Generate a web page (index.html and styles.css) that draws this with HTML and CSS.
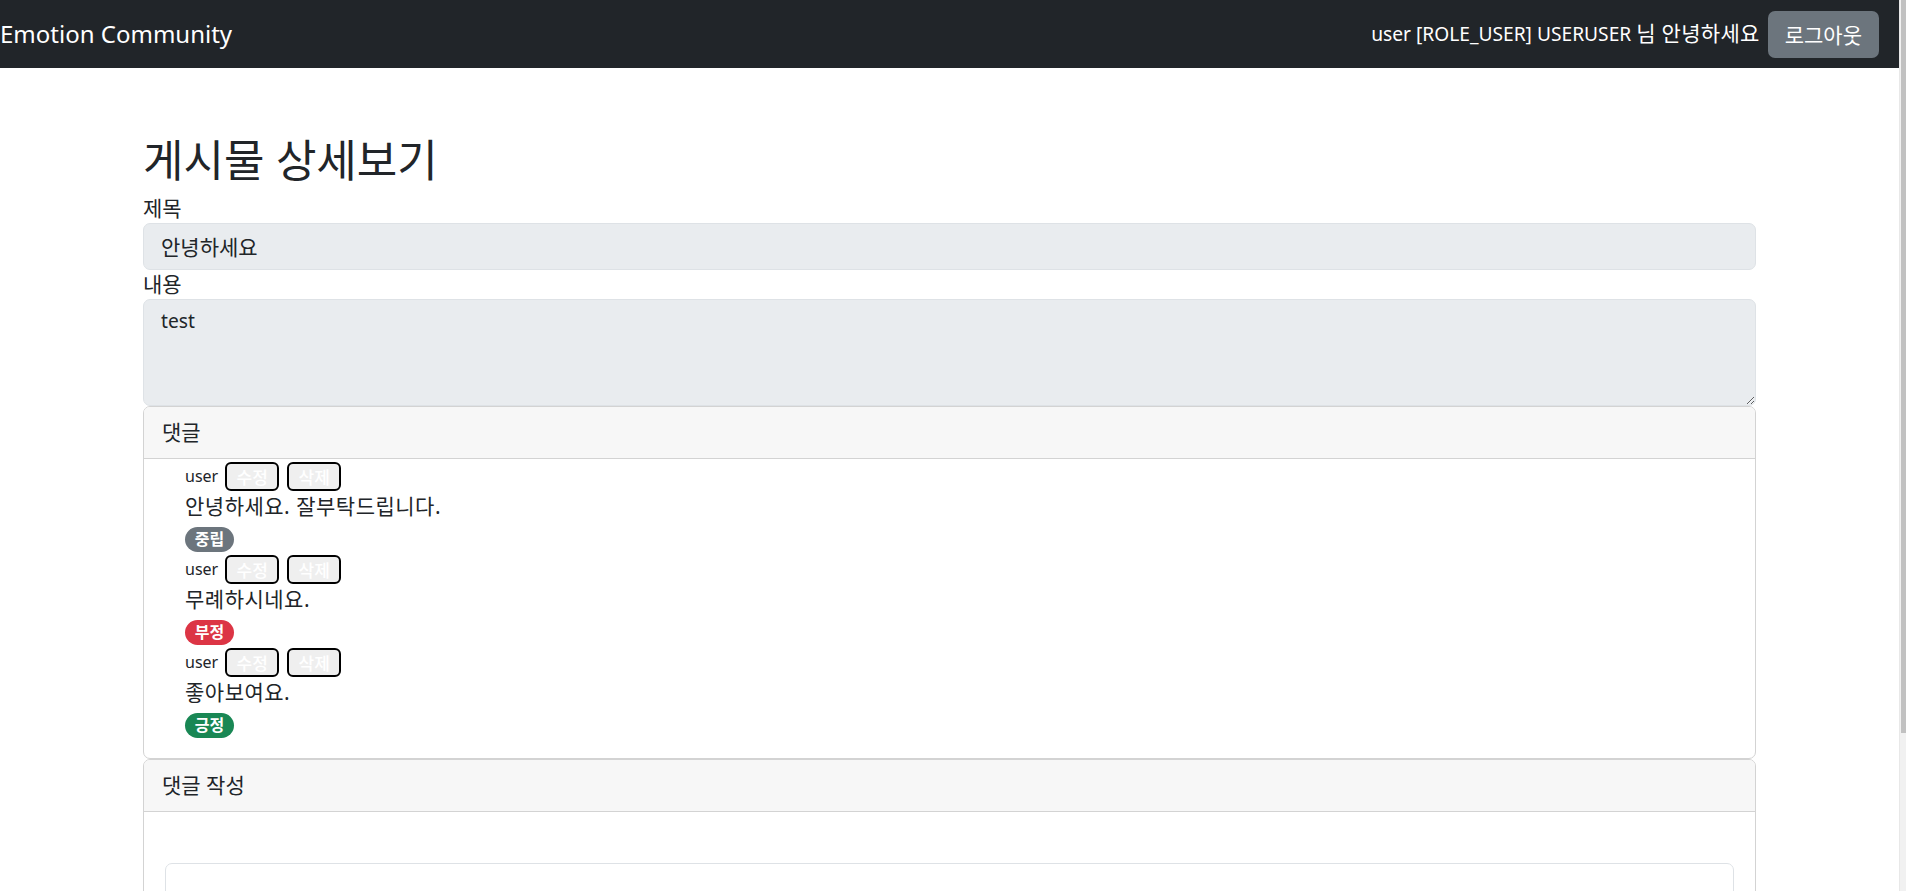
FILE: index.html
```html
<!DOCTYPE html>
<html lang="ko">
<head>
    <meta charset="UTF-8">
    <meta name="viewport" content="width=device-width, initial-scale=1.0">
    <title>게시물 상세보기 - Emotion Community</title>
    <link rel="stylesheet" href="styles.css">
</head>
<body>
    <nav class="navbar">
        <a class="navbar-brand" href="#">Emotion Community</a>
        <div class="nav-user">
            <span class="nav-greeting">user [ROLE_USER] USERUSER <span class="greeting-ko">님 안녕하세요</span></span>
            <button class="btn-logout">로그아웃</button>
        </div>
    </nav>

    <main class="page">
        <div class="container">
            <h1 class="page-title">게시물 상세보기</h1>

            <label class="form-label" for="title">제목</label>
            <input class="form-control" id="title" type="text" value="안녕하세요" readonly>

            <label class="form-label" for="content">내용</label>
            <textarea class="form-control form-textarea" id="content" readonly>test</textarea>

            <div class="card">
                <div class="card-header">댓글</div>
                <ul class="comment-list">
                    <li class="comment">
                        <div class="comment-meta">
                            <span class="comment-user">user</span>
                            <button class="btn-small">수정</button>
                            <button class="btn-small">삭제</button>
                        </div>
                        <div class="comment-text">안녕하세요. 잘부탁드립니다.</div>
                        <div class="comment-emotion"><span class="badge badge-neutral">중립</span></div>
                    </li>
                    <li class="comment">
                        <div class="comment-meta">
                            <span class="comment-user">user</span>
                            <button class="btn-small">수정</button>
                            <button class="btn-small">삭제</button>
                        </div>
                        <div class="comment-text">무례하시네요.</div>
                        <div class="comment-emotion"><span class="badge badge-negative">부정</span></div>
                    </li>
                    <li class="comment">
                        <div class="comment-meta">
                            <span class="comment-user">user</span>
                            <button class="btn-small">수정</button>
                            <button class="btn-small">삭제</button>
                        </div>
                        <div class="comment-text">좋아보여요.</div>
                        <div class="comment-emotion"><span class="badge badge-positive">긍정</span></div>
                    </li>
                </ul>
            </div>

            <div class="card">
                <div class="card-header">댓글 작성</div>
                <div class="card-body">
                    <textarea class="comment-input"></textarea>
                    <button class="btn-submit">등록</button>
                </div>
            </div>
        </div>
    </main>

    <!-- window scrollbar, drawn since the page is cut at the fold -->
    <div class="scrollbar"><div class="scrollbar-thumb"></div></div>
</body>
</html>
```

FILE: styles.css
```css
* {
    box-sizing: border-box;
}

html, body {
    height: 100%;
    overflow: hidden;
}

body {
    margin: 0 7px 0 0;
    font-family: "Noto Sans", "Noto Sans CJK KR", sans-serif;
    font-size: 19.2px;
    line-height: 1.5;
    color: #212529;
    background: #fff;
}

/* top bar */
.navbar {
    height: 68px;
    display: flex;
    align-items: center;
    justify-content: space-between;
    padding: 0 20px 0 0;
    background: #212529;
}

.navbar-brand {
    font-size: 24px;
    color: #fff;
    text-decoration: none;
}

.nav-user {
    display: flex;
    align-items: center;
    gap: 8px;
    color: #fff;
}

.greeting-ko {
    font-size: 21px;
    letter-spacing: 0.3px;
}

.btn-logout {
    height: 47px;
    padding: 0 17px;
    border: none;
    border-radius: 7px;
    background: #6c757d;
    color: #fff;
    font-family: inherit;
    font-size: 21px;
}

.page {
    padding-bottom: 50px;
}

.container {
    width: 1613px;
    margin: 0 auto;
}

.page-title {
    margin: 66px 0 7px;
    font-size: 44px;
    font-weight: 400;
    line-height: 1.2;
}

.form-label {
    display: block;
    font-size: 21px;
    line-height: 29px;
}

.form-control {
    display: block;
    width: 100%;
    height: 47px;
    padding: 7px 17px;
    border: 1px solid #dee2e6;
    border-radius: 7px;
    background: #e9ecef;
    color: #212529;
    font-family: inherit;
    font-size: 21px;
    line-height: 1.5;
}

.form-control:focus {
    outline: none;
}

.form-textarea {
    height: 107px;
    font-size: 19.2px;
    resize: vertical;
}

/* cards */
.card {
    border: 1px solid #d3d3d3;
    border-radius: 7px;
    overflow: hidden;
}

.card-header {
    height: 52px;
    padding: 0 18px;
    font-size: 21px;
    line-height: 50px;
    background: #f7f7f7;
    border-bottom: 1px solid #d3d3d3;
}

.card-body {
    padding: 51px 21px 21px;
}

.comment-list {
    list-style: none;
    margin: 0 0 17px;
    padding: 3px 0 0 41px;
}

.comment-meta {
    display: flex;
    align-items: center;
    height: 29px;
}

.comment-user {
    font-size: 16px;
    margin-right: 7px;
}

.btn-small {
    height: 29px;
    width: 54px;
    padding: 0;
    margin-right: 8px;
    border: 2px solid #000;
    border-radius: 6px;
    background: #efefef;
    color: #fff;
    font-family: inherit;
    font-size: 17px;
    font-weight: 500;
}

.comment-text {
    font-size: 21px;
    letter-spacing: 0.5px;
    line-height: 30px;
}

.comment-emotion {
    display: flex;
    align-items: flex-start;
    height: 34px;
    padding-top: 6px;
}

.badge {
    height: 25px;
    width: 49px;
    border-radius: 13px;
    color: #fff;
    font-size: 16px;
    font-weight: 700;
    line-height: 25px;
    text-align: center;
}

.badge-neutral {
    background: #6c757d;
}

.badge-negative {
    background: #dc3545;
}

.badge-positive {
    background: #198754;
}

.comment-input {
    display: block;
    width: 100%;
    height: 100px;
    border: 1px solid #dee2e6;
    border-radius: 7px;
    resize: none;
}

.btn-submit {
    margin-top: 10px;
    height: 38px;
    padding: 0 16px;
    border: none;
    border-radius: 7px;
    background: #0d6efd;
    color: #fff;
    font-family: inherit;
    font-size: 19.2px;
}

/* fake window scrollbar */
.scrollbar {
    position: fixed;
    top: 0;
    right: 0;
    width: 7px;
    height: 100%;
    background: #f1f1f1;
    border-left: 1px solid #e8e8e8;
}

.scrollbar-thumb {
    height: 733px;
    margin-left: 1px;
    background: #c1c1c1;
}
```
